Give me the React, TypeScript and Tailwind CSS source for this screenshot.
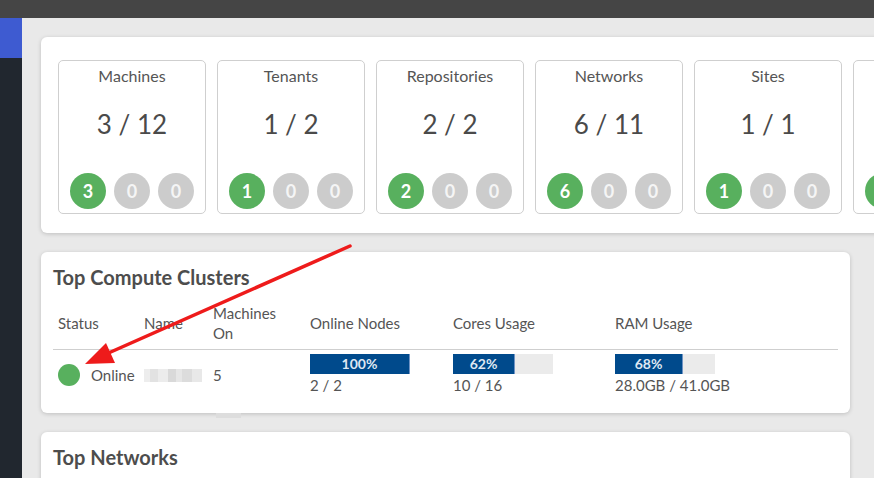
import React from "react";

const stats = [
  { title: "Machines", value: "3 / 12", n: "3" },
  { title: "Tenants", value: "1 / 2", n: "1" },
  { title: "Repositories", value: "2 / 2", n: "2" },
  { title: "Networks", value: "6 / 11", n: "6" },
  { title: "Sites", value: "1 / 1", n: "1" },
  { title: "", value: "", n: "" },
];

function StatCard({ title, value, n }: { title: string; value: string; n: string }) {
  return (
    <div className="w-[148px] h-[154px] shrink-0 border border-[#cfcfcf] rounded-[5px] flex flex-col items-center">
      <div className="mt-[5px] h-[20px] leading-[20px] text-[16px] text-[#555]">{title}</div>
      <div className="mt-[23px] h-[30px] leading-[30px] text-[26px] text-[#4a4a4a]">{value}</div>
      <div className="mt-[34px] flex gap-[8px]">
        <div className="w-[36px] h-[36px] rounded-full bg-[#58b05e] text-white font-bold text-[18px] flex items-center justify-center">{n}</div>
        <div className="w-[36px] h-[36px] rounded-full bg-[#cccccc] text-[#f5f5f5] font-bold text-[18px] flex items-center justify-center">{n ? "0" : ""}</div>
        <div className="w-[36px] h-[36px] rounded-full bg-[#cccccc] text-[#f5f5f5] font-bold text-[18px] flex items-center justify-center">{n ? "0" : ""}</div>
      </div>
    </div>
  );
}

function Bar({ pct, label, sub }: { pct: number; label: string; sub: string }) {
  return (
    <div className="flex flex-col">
      <div className="relative w-[100px] h-[20px] bg-[#ebebeb]">
        <div className="absolute left-0 top-0 h-full bg-[#004a8c] border-r border-[#6f93c4]" style={{ width: `${pct}%` }}>
          <div className="w-full text-center text-[14px] leading-[20px] font-bold text-[#dfe7f2]">{label}</div>
        </div>
      </div>
      <div className="text-[15px] leading-[22px] text-[#555]">{sub}</div>
    </div>
  );
}

export default function App() {
  return (
    <div
      className="relative w-[874px] h-[478px] overflow-hidden bg-[#e9e9e9]"
      style={{ fontFamily: "Lato, 'Open Sans', sans-serif" }}
    >
      <div className="h-[18px] bg-[#454545]" />
      <div className="flex h-[460px]">
        <div className="w-[22px] shrink-0 flex flex-col">
          <div className="h-[40px] bg-[#3e5bd1]" />
          <div className="flex-1 bg-[#21272f]" />
        </div>
        <div className="flex-1 overflow-hidden pl-[19px] pt-[19px]">
          {/* Summary card */}
          <div className="w-[1000px] bg-white rounded-[6px] shadow-[0_1px_4px_rgba(0,0,0,0.18)] pl-[17px] pt-[23px] pb-[19px] flex gap-[11px]">
            {stats.map((s, i) => (
              <StatCard key={i} {...s} />
            ))}
          </div>

          {/* Top Compute Clusters */}
          <div className="mt-[19px] w-[809px] h-[161px] bg-white rounded-[6px] shadow-[0_1px_4px_rgba(0,0,0,0.18)] px-[12px] pt-[13px]">
            <div className="text-[20px] leading-[24px] font-bold text-[#4d4d4d]">Top Compute Clusters</div>
            <div className="mt-[12px] w-[785px]">
              <div className="flex h-[49px] border-b border-[#cfcfcf] text-[15px] text-[#555] leading-[20px]">
                <div className="w-[86px] pl-[5px] pt-[12px]">Status</div>
                <div className="w-[69px] pl-[5px] pt-[12px]">Name</div>
                <div className="w-[97px] pl-[5px] pt-[2px]">Machines<br />On</div>
                <div className="w-[143px] pl-[5px] pt-[12px]">Online Nodes</div>
                <div className="w-[162px] pl-[5px] pt-[12px]">Cores Usage</div>
                <div className="flex-1 pl-[5px] pt-[12px]">RAM Usage</div>
              </div>
              <div className="flex pt-[4px] text-[15px] text-[#555]">
                <div className="w-[86px] pl-[5px] flex items-center gap-[11px] h-[42px]">
                  <div className="w-[22px] h-[22px] rounded-full bg-[#58b05e]" />
                  <span>Online</span>
                </div>
                <div className="w-[69px] pl-[5px] h-[42px] flex items-center">
                  <div className="flex h-[13px] mt-[1px]">
                    <div className="w-[6px] bg-[#ededed]" />
                    <div className="w-[8px] bg-[#e2e2e2]" />
                    <div className="w-[10px] bg-[#ececec]" />
                    <div className="w-[8px] bg-[#d9d9d9]" />
                    <div className="w-[6px] bg-[#e6e6e6]" />
                    <div className="w-[10px] bg-[#dcdcdc]" />
                    <div className="w-[10px] bg-[#e8e8e8]" />
                  </div>
                </div>
                <div className="w-[97px] pl-[5px] h-[42px] flex items-center">5</div>
                <div className="w-[143px] pl-[5px]">
                  <Bar pct={100} label="100%" sub="2 / 2" />
                </div>
                <div className="w-[162px] pl-[5px]">
                  <Bar pct={62} label="62%" sub="10 / 16" />
                </div>
                <div className="flex-1 pl-[5px]">
                  <Bar pct={68} label="68%" sub="28.0GB / 41.0GB" />
                </div>
              </div>
            </div>
          </div>

          <div className="h-[19px]">
            <div className="ml-[175px] w-[25px] h-[5px] bg-[#dddddd]" />
          </div>

          {/* Top Networks */}
          <div className="w-[809px] h-[100px] bg-white rounded-[6px] shadow-[0_1px_4px_rgba(0,0,0,0.18)] px-[12px] pt-[13px]">
            <div className="text-[20px] leading-[24px] font-bold text-[#4d4d4d]">Top Networks</div>
          </div>
        </div>
      </div>

      {/* Red annotation arrow */}
      <svg className="absolute left-0 top-0 pointer-events-none" width="874" height="478" viewBox="0 0 874 478">
        <line x1="350" y1="246" x2="104" y2="355" stroke="#ee1b1b" strokeWidth="3.5" strokeLinecap="round" />
        <polygon points="85,364 106,343 115,363" fill="#ee1b1b" />
      </svg>
    </div>
  );
}
